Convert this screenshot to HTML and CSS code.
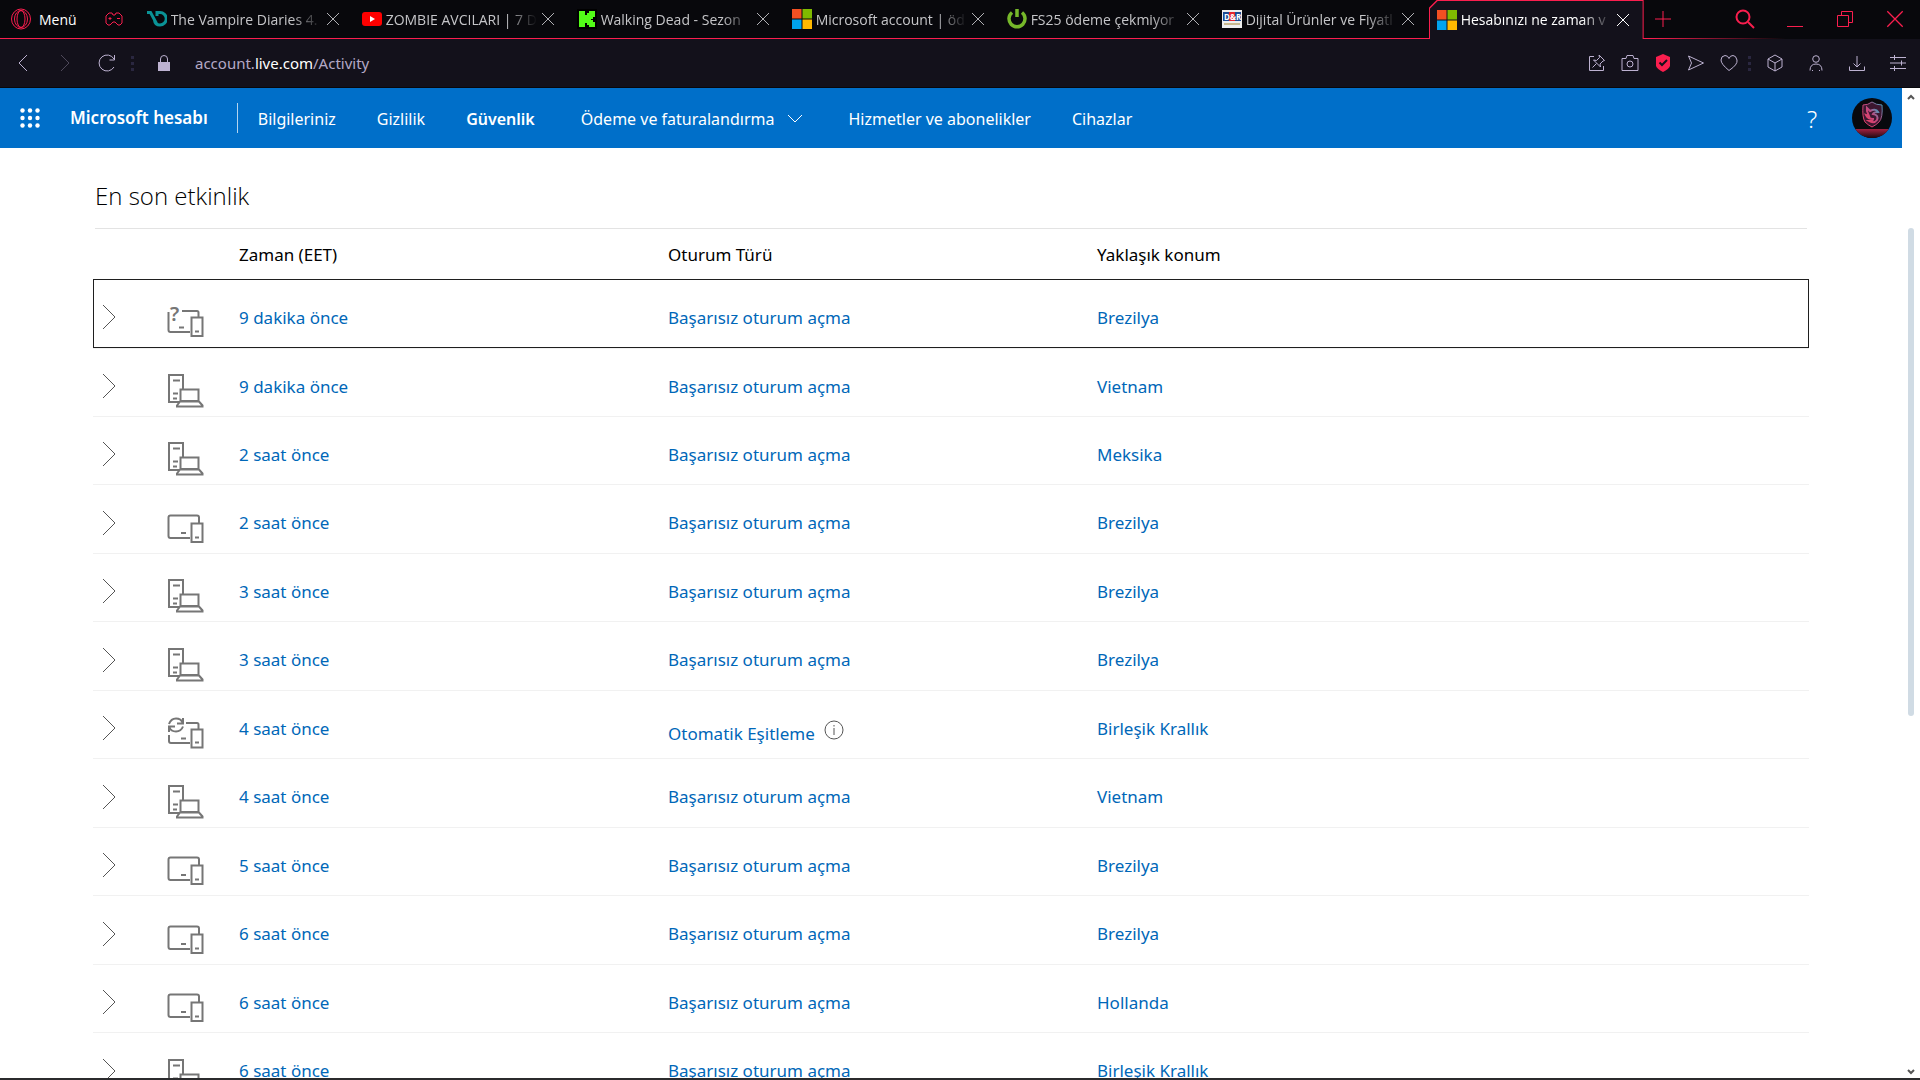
FILE: index.html
```
<!DOCTYPE html>
<html lang="tr">
<head>
    <meta charset="UTF-8">
    <meta name="viewport" content="width=device-width, initial-scale=1.0">
    <title>Hesabınızı ne zaman ve nerede kullandınız</title>
    <link rel="stylesheet" href="styles.css">
</head>
<body>

    <!-- Shared icons -->
    <svg class="sprite" aria-hidden="true">
        <symbol id="close" viewBox="0 0 14 14"><path d="M1 1l12 12M13 1L1 13"/></symbol>
        <symbol id="microsoft" viewBox="0 0 20 20">
            <path fill="#f25022" d="M0 0h9.5v9.5H0z"/><path fill="#7fba00" d="M10.500 0H20v9.500h-9.500z"/>
            <path fill="#00a4ef" d="M0 10.500h9.500V20H0z"/><path fill="#ffb900" d="M10.500 10.500H20V20h-9.500z"/>
        </symbol>
        <symbol id="chevron" viewBox="0 0 14 26"><path d="M1 1l12 12L1 25"/></symbol>
        <symbol id="pc" viewBox="0 0 40 38">
            <path d="M13 30H3V3h14v14M7 8.500h7M7 21.500h5M7 26.500h4"/>
            <path d="M14.500 29V17.500h18V29zM14 29.500h19l3.500 4v1H11v-1z"/>
        </symbol>
        <symbol id="tablet" viewBox="0 0 40 38">
            <path d="M24 29H4.500Q2.500 29 2.500 27V8.500Q2.500 6.500 4.500 6.500H31q2 0 2 2V14M15 24h5"/>
            <path d="M25.500 14.500h11v18.500h-11zM29 28.500h4"/>
        </symbol>
        <symbol id="unknown" viewBox="0 0 40 38">
            <path d="M2.500 9v18q0 2 2 2H24M16 8h15q1.500 0 1.500 1.500V14M13 24.500h5"/>
            <path d="M25.500 14.500h11v18.500h-11zM29 28.500h4"/>
            <text x="4" y="18">?</text>
        </symbol>
        <symbol id="sync" viewBox="0 0 40 38">
            <path d="M3 21v6q0 2 2 2h19M20 9h11q1.500 0 1.500 1.500V15M15 24.500h5"/>
            <path d="M25.500 15.500h11v18h-11zM29 28.500h4"/>
            <path d="M3 10Q5 4.500 10 4.500t6.500 4M17 4v5.500h-6M17 12.500Q15 17.500 10 17.500t-6.500-4M3 18v-5.500h6"/>
        </symbol>
    </svg>

    <!-- Tab strip -->
    <header class="tabbar">
        <button class="menu">
            <svg width="20" height="22" viewBox="0 0 20 22"><ellipse cx="10" cy="11" rx="9.500" ry="10"/><ellipse cx="10" cy="11" rx="6.500" ry="8.500"/><ellipse cx="10" cy="11" rx="4" ry="8.500"/></svg>
            Menü
        </button>
        <button class="gx" aria-label="GX">
            <svg width="18" height="14" viewBox="0 0 18 14"><path d="M4 1h3l1 2h2l1-2h3l3 3v7l-2 2h-2l-3-3H8l-3 3H3l-2-2V4z"/><path d="M5 5v3M3.500 6.500h3M12 6.500h3"/></svg>
        </button>
        <nav class="tabs">
            <div class="tab">
                <svg class="favicon" viewBox="0 0 20 16"><path fill="none" stroke="#0a9396" stroke-width="3" d="M0 1.500h3.500l6 11M10 5V1.500h3a5.500 5.500 0 0 1 0 12.500q-5 0-5.500-5"/></svg>
                <a href="#">The Vampire Diaries 4.</a>
                <button class="close" aria-label="Kapat"><svg><use href="#close"/></svg></button>
            </div>
            <div class="tab">
                <svg class="favicon" viewBox="0 0 20 14"><rect width="20" height="14" rx="3" fill="#f00"/><path fill="#fff" d="M8 4l5 3-5 3z"/></svg>
                <a href="#">ZOMBIE AVCILARI | 7 D</a>
                <button class="close" aria-label="Kapat"><svg><use href="#close"/></svg></button>
            </div>
            <div class="tab">
                <svg class="favicon" viewBox="0 0 20 20"><path fill="#000" d="M0 0h20v20H0z"/><path fill="#53fc18" d="M2 2h6v4h2V4h2V2h6v6h-2v2h-2v1h2v2h2v5h-6v-2h-2v-2H8v4H2z"/></svg>
                <a href="#">Walking Dead - Sezon</a>
                <button class="close" aria-label="Kapat"><svg><use href="#close"/></svg></button>
            </div>
            <div class="tab">
                <svg class="favicon"><use href="#microsoft"/></svg>
                <a href="#">Microsoft account | öd</a>
                <button class="close" aria-label="Kapat"><svg><use href="#close"/></svg></button>
            </div>
            <div class="tab">
                <svg class="favicon" viewBox="0 0 20 20"><path fill="none" stroke="#76b82a" stroke-width="3.500" d="M5 3.500a8 8 0 1 0 10 0M10 0v8"/></svg>
                <a href="#">FS25 ödeme çekmiyor</a>
                <button class="close" aria-label="Kapat"><svg><use href="#close"/></svg></button>
            </div>
            <div class="tab">
                <svg class="favicon" viewBox="0 0 20 18"><path fill="#eee" d="M0 0h20v18H0z"/><path fill="#1c4b93" d="M1 2h6v9H1zM13 2h6v9h-6z"/><path fill="#e3262e" d="M7 2h6v9H7z"/><path fill="#c9b98f" d="M2 13h16v2H2z"/><text x="2" y="10" class="dr">D&amp;R</text></svg>
                <a href="#">Dijital Ürünler ve Fiyatl</a>
                <button class="close" aria-label="Kapat"><svg><use href="#close"/></svg></button>
            </div>
            <div class="tab active">
                <svg class="favicon"><use href="#microsoft"/></svg>
                <a href="#">Hesabınızı ne zaman v</a>
                <button class="close" aria-label="Kapat"><svg><use href="#close"/></svg></button>
            </div>
            <button class="newtab" aria-label="Yeni sekme"><svg width="16" height="16" viewBox="0 0 16 16"><path d="M8 0v16M0 8h16"/></svg></button>
        </nav>
        <div class="window">
            <button aria-label="Ara"><svg width="20" height="20" viewBox="0 0 20 20"><circle cx="8" cy="8" r="6.500" stroke-width="2"/><path stroke-width="2" d="M13 13l6 6"/></svg></button>
            <button aria-label="Simge durumuna küçült"><svg width="16" height="16" viewBox="0 0 16 16"><path d="M0 15.500h16"/></svg></button>
            <button aria-label="Geri yükle"><svg width="16" height="16" viewBox="0 0 16 16"><path d="M.5 4.500h11v11H.5zM4.500 4V.5h11v11H12"/></svg></button>
            <button aria-label="Pencereyi kapat"><svg width="18" height="18"><use href="#close"/></svg></button>
        </div>
    </header>

    <!-- Address bar -->
    <div class="toolbar">
        <button aria-label="Geri"><svg width="10" height="16" viewBox="0 0 10 16"><path d="M9 0L1 8l8 8"/></svg></button>
        <button aria-label="İleri" class="dim"><svg width="10" height="16" viewBox="0 0 10 16"><path d="M1 0l8 8-8 8"/></svg></button>
        <button aria-label="Yenile"><svg width="18" height="18" viewBox="0 0 18 18"><path d="M16 5A8 8 0 1 0 16 13M16.500 1v5h-5"/></svg></button>
        <span class="dots"></span>
        <svg class="lock" width="12" height="16" viewBox="0 0 12 16"><path d="M0 7h12v9H0z"/><path fill="none" stroke="#bdb2d1" d="M2.500 7V4q0-3.500 3.500-3.500T9.500 4v3"/></svg>
        <a class="url" href="#">account.<b>live.com</b>/Activity</a>
        <div class="tools">
            <button aria-label="Sabitle"><svg width="18" height="18" viewBox="0 0 18 18"><path d="M6 2.500H1.500v14h14V12M11 1l5.500 5.500-1.500.500-3 3 .500 3-7-7 3 .500 3-3zM8.500 9.500l-4 4"/></svg></button>
            <button aria-label="Ekran görüntüsü"><svg width="18" height="16" viewBox="0 0 18 16"><path d="M1 3.500h4l1-3h6l1 3h4v12H1z"/><circle cx="9" cy="9" r="3"/></svg></button>
            <button aria-label="Reklam engelleyici"><svg width="16" height="18" viewBox="0 0 16 18"><path fill="#fa1e4e" stroke="none" d="M8 0l7 3v9q-1 3-7 6-6-3-7-6V3z"/><path stroke="#13111b" stroke-width="2" d="M4.500 8.500L7 11l5-5"/></svg></button>
            <button aria-label="Akışım"><svg width="18" height="16" viewBox="0 0 18 16"><path d="M1.500 1l15 7-15 7 3-7z"/></svg></button>
            <button aria-label="Yer imi"><svg width="18" height="16" viewBox="0 0 18 16"><path d="M9 15.500Q1 9 1 5t4-4.500q3 0 4 3 1-3 4-3t4 4.500-8 10.500z"/></svg></button>
        </div>
        <span class="dots"></span>
        <div class="extras">
            <button aria-label="Uzantılar"><svg width="16" height="18" viewBox="0 0 16 18"><path d="M8 1l7 4v8l-7 4-7-4V5zM1 5l7 4 7-4M8 9v8"/></svg></button>
            <button aria-label="Profil"><svg width="14" height="16" viewBox="0 0 14 16"><circle cx="7" cy="4" r="3.300"/><path d="M1 15.500q0-6.500 6-6.500t6 6.500M3 15.500h1M10 15.500h1"/></svg></button>
            <button aria-label="İndirilenler"><svg width="16" height="16" viewBox="0 0 16 16"><path d="M8 1v11M4.500 8.500L8 12l3.500-3.500M.5 11.500v4h15v-4"/></svg></button>
            <button aria-label="Ayarlar"><svg width="16" height="16" viewBox="0 0 16 16"><path d="M0 2.500h16M0 8h16M0 13.500h16M4.500 0v5M11.500 5.500v5M4.500 11v5"/></svg></button>
        </div>
    </div>

    <div class="viewport">
        <div class="page">
            <!-- Account header -->
            <header class="account">
                <button class="waffle" aria-label="Uygulamalar">
                    <svg width="20" height="20" viewBox="0 0 20 20"><circle cx="2.500" cy="2.500" r="2.200"/><circle cx="10" cy="2.500" r="2.200"/><circle cx="17.500" cy="2.500" r="2.200"/><circle cx="2.500" cy="10" r="2.200"/><circle cx="10" cy="10" r="2.200"/><circle cx="17.500" cy="10" r="2.200"/><circle cx="2.500" cy="17.500" r="2.200"/><circle cx="10" cy="17.500" r="2.200"/><circle cx="17.500" cy="17.500" r="2.200"/></svg>
                </button>
                <a class="brand" href="#">Microsoft hesabı</a>
                <nav>
                    <a href="#">Bilgileriniz</a>
                    <a href="#">Gizlilik</a>
                    <a href="#" class="current">Güvenlik</a>
                    <button class="drop">Ödeme ve faturalandırma <svg width="16" height="10" viewBox="0 0 16 10"><path d="M1 1l7 7 7-7"/></svg></button>
                    <a href="#">Hizmetler ve abonelikler</a>
                    <a href="#">Cihazlar</a>
                </nav>
                <button class="help" aria-label="Yardım">?</button>
                <button class="avatar" aria-label="Hesabım">
                    <svg width="40" height="40" viewBox="0 0 40 40">
                        <defs>
                            <linearGradient id="neon" x1="1" y1="0" x2="0" y2="1"><stop offset="0" stop-color="#38a9c4"/><stop offset=".45" stop-color="#c2487f"/><stop offset="1" stop-color="#e83f62"/></linearGradient>
                            <linearGradient id="floor" x1="0" y1="0" x2="0" y2="1"><stop offset="0" stop-color="#a3203f"/><stop offset="1" stop-color="#1c0a12"/></linearGradient>
                            <clipPath id="round"><circle cx="20" cy="20" r="20"/></clipPath>
                        </defs>
                        <g clip-path="url(#round)">
                            <path fill="#08090d" d="M0 0h40v40H0z"/>
                            <path fill="url(#floor)" d="M0 31h40v9H0z"/>
                            <path fill="#3c1730" stroke="url(#neon)" d="M11 7q5 0 9-3 4 3 10 3 1 13-3 17-3 3-7 5-4-2-7-5-3-5-2-17z"/>
                            <path fill="none" stroke="url(#neon)" stroke-width="2" d="M15 10l3 3q6-3 8 1-4 0-5 2 6 1 4 6-3 4-8 1 4 0 4-2-5 0-7-4l3 1-2-5z"/>
                        </g>
                    </svg>
                </button>
            </header>

            <main>
                <h1>En son etkinlik</h1>
                <table>
                    <colgroup><col class="c-toggle"><col class="c-device"><col class="c-text"><col class="c-text"><col></colgroup>
                    <thead>
                        <tr><td></td><td></td><th>Zaman (EET)</th><th>Oturum Türü</th><th>Yaklaşık konum</th></tr>
                    </thead>
                    <tbody>
                        <tr class="focused">
                            <td><button aria-label="Genişlet"><svg><use href="#chevron"/></svg></button></td>
                            <td><svg class="device"><use href="#unknown"/></svg></td>
                            <td><a href="#">9 dakika önce</a></td><td><a href="#">Başarısız oturum açma</a></td><td><a href="#">Brezilya</a></td>
                        </tr>
                        <tr>
                            <td><button aria-label="Genişlet"><svg><use href="#chevron"/></svg></button></td>
                            <td><svg class="device"><use href="#pc"/></svg></td>
                            <td><a href="#">9 dakika önce</a></td><td><a href="#">Başarısız oturum açma</a></td><td><a href="#">Vietnam</a></td>
                        </tr>
                        <tr>
                            <td><button aria-label="Genişlet"><svg><use href="#chevron"/></svg></button></td>
                            <td><svg class="device"><use href="#pc"/></svg></td>
                            <td><a href="#">2 saat önce</a></td><td><a href="#">Başarısız oturum açma</a></td><td><a href="#">Meksika</a></td>
                        </tr>
                        <tr>
                            <td><button aria-label="Genişlet"><svg><use href="#chevron"/></svg></button></td>
                            <td><svg class="device"><use href="#tablet"/></svg></td>
                            <td><a href="#">2 saat önce</a></td><td><a href="#">Başarısız oturum açma</a></td><td><a href="#">Brezilya</a></td>
                        </tr>
                        <tr>
                            <td><button aria-label="Genişlet"><svg><use href="#chevron"/></svg></button></td>
                            <td><svg class="device"><use href="#pc"/></svg></td>
                            <td><a href="#">3 saat önce</a></td><td><a href="#">Başarısız oturum açma</a></td><td><a href="#">Brezilya</a></td>
                        </tr>
                        <tr>
                            <td><button aria-label="Genişlet"><svg><use href="#chevron"/></svg></button></td>
                            <td><svg class="device"><use href="#pc"/></svg></td>
                            <td><a href="#">3 saat önce</a></td><td><a href="#">Başarısız oturum açma</a></td><td><a href="#">Brezilya</a></td>
                        </tr>
                        <tr>
                            <td><button aria-label="Genişlet"><svg><use href="#chevron"/></svg></button></td>
                            <td><svg class="device"><use href="#sync"/></svg></td>
                            <td><a href="#">4 saat önce</a></td>
                            <td class="auto"><a href="#">Otomatik Eşitleme</a> <button class="info" aria-label="Bilgi"><svg width="20" height="20" viewBox="0 0 20 20"><circle cx="10" cy="10" r="9"/><path d="M10 8v7M10 5v1.500"/></svg></button></td>
                            <td><a href="#">Birleşik Krallık</a></td>
                        </tr>
                        <tr>
                            <td><button aria-label="Genişlet"><svg><use href="#chevron"/></svg></button></td>
                            <td><svg class="device"><use href="#pc"/></svg></td>
                            <td><a href="#">4 saat önce</a></td><td><a href="#">Başarısız oturum açma</a></td><td><a href="#">Vietnam</a></td>
                        </tr>
                        <tr>
                            <td><button aria-label="Genişlet"><svg><use href="#chevron"/></svg></button></td>
                            <td><svg class="device"><use href="#tablet"/></svg></td>
                            <td><a href="#">5 saat önce</a></td><td><a href="#">Başarısız oturum açma</a></td><td><a href="#">Brezilya</a></td>
                        </tr>
                        <tr>
                            <td><button aria-label="Genişlet"><svg><use href="#chevron"/></svg></button></td>
                            <td><svg class="device"><use href="#tablet"/></svg></td>
                            <td><a href="#">6 saat önce</a></td><td><a href="#">Başarısız oturum açma</a></td><td><a href="#">Brezilya</a></td>
                        </tr>
                        <tr>
                            <td><button aria-label="Genişlet"><svg><use href="#chevron"/></svg></button></td>
                            <td><svg class="device"><use href="#tablet"/></svg></td>
                            <td><a href="#">6 saat önce</a></td><td><a href="#">Başarısız oturum açma</a></td><td><a href="#">Hollanda</a></td>
                        </tr>
                        <tr>
                            <td><button aria-label="Genişlet"><svg><use href="#chevron"/></svg></button></td>
                            <td><svg class="device"><use href="#pc"/></svg></td>
                            <td><a href="#">6 saat önce</a></td><td><a href="#">Başarısız oturum açma</a></td><td><a href="#">Birleşik Krallık</a></td>
                        </tr>
                    </tbody>
                </table>
            </main>
        </div>

        <div class="scrollbar">
            <svg width="8" height="6" viewBox="0 0 8 6"><path d="M1 5l3-3 3 3"/></svg>
            <div class="track"><div class="thumb"></div></div>
            <svg width="8" height="6" viewBox="0 0 8 6"><path d="M1 1l3 3 3-3"/></svg>
        </div>
    </div>
    <div class="taskbar-edge"></div>

</body>
</html>
```
FILE: styles.css
```
* {
    box-sizing: border-box;
}

body {
    margin: 0;
    height: 100vh;
    display: flex;
    flex-direction: column;
    overflow: hidden;
    font-family: "Noto Sans", "Open Sans", sans-serif;
    font-size: 17px;
    color: #000;
    background-color: #fff;
}

button {
    margin: 0;
    padding: 0;
    border: none;
    background: none;
    font: inherit;
    color: inherit;
    display: flex;
    align-items: center;
    justify-content: center;
    cursor: pointer;
}

a {
    color: inherit;
    text-decoration: none;
}

svg {
    flex: none;
    display: block;
    fill: none;
}

.sprite {
    display: none;
}

/* Tab strip */
.tabbar {
    display: flex;
    height: 39px;
    padding-bottom: 1px;
    background: linear-gradient(to right, #fa1e4e 86%, transparent 93%) bottom / 100% 1px no-repeat #08080c;
    color: #c5c5c8;
    font-family: "Open Sans", "Noto Sans", sans-serif;
    font-size: 14px;
}

.tabbar svg {
    stroke: #fa1e4e;
}

.menu {
    gap: 8px;
    margin-left: 11px;
    color: #fff;
}

.gx {
    width: 62px;
    padding-left: 12px;
}

.tabs {
    flex: 1;
    display: flex;
    min-width: 0;
}

.tab {
    flex: 0 1 215px;
    min-width: 0;
    display: flex;
    align-items: center;
    gap: 4px;
    padding: 0 14px 0 8px;
}

.tab a {
    flex: 1;
    min-width: 0;
    overflow: hidden;
    white-space: nowrap;
    mask-image: linear-gradient(to right, #000 80%, transparent);
}

.tab .favicon {
    width: 20px;
    height: 20px;
    stroke: none;
}

.dr {
    font-size: 8px;
    font-weight: bold;
    fill: #fff;
}

.close svg {
    width: 14px;
    height: 14px;
    stroke: #b0b0b4;
}

.active {
    position: relative;
    z-index: 0;
    margin-bottom: -1px;
    background-color: #fa1e4e;
    color: #fff;
    clip-path: polygon(0 8px, 8px 0, 100% 0, 100% 100%, 0 100%);
}

.active::before {
    content: "";
    position: absolute;
    inset: 1px 1px 0;
    z-index: -1;
    background-color: #13111b;
    clip-path: polygon(0 8px, 8px 0, 100% 0, 100% 100%, 0 100%);
}

.active .close svg {
    stroke: #fff;
}

.newtab {
    width: 38px;
}

.window {
    display: flex;
}

.window button {
    width: 50px;
}

/* Address bar */
.toolbar {
    display: flex;
    align-items: center;
    height: 49px;
    padding: 0 2px;
    background-color: #13111b;
    border-bottom: 1px solid #08080c;
    color: #b3a9c6;
    font-size: 15px;
}

.toolbar button {
    width: 42px;
    height: 40px;
}

.toolbar svg {
    stroke: #bdb2d1;
}

.toolbar .dim {
    opacity: 0.35;
}

.dots {
    width: 3px;
    height: 15px;
    margin: 0 3px;
    background: repeating-linear-gradient(#2a2740 0 3px, transparent 3px 6px);
}

.toolbar .lock {
    margin: 0 25px 0 21px;
    fill: #bdb2d1;
    stroke: none;
}

.url {
    flex: 1;
}

.url b {
    font-weight: 400;
    color: #fff;
}

.tools,
.extras {
    display: flex;
}

.toolbar .tools button {
    width: 33px;
}

.toolbar .extras button {
    width: 41px;
}

/* Page area */
.viewport {
    flex: 1;
    min-height: 0;
    display: flex;
}

.page {
    flex: 1;
    min-width: 0;
    overflow: hidden;
}

.account {
    display: flex;
    align-items: center;
    height: 60px;
    padding: 0 10px 0 20px;
    background-color: #006fc9;
    color: #fff;
    font-size: 16px;
}

.waffle svg {
    fill: #fff;
}

.brand {
    margin-left: 30px;
    padding-right: 29px;
    border-right: 1px solid #b3d4ef;
    font-size: 17px;
    font-weight: 600;
    line-height: 30px;
}

.account nav {
    flex: 1;
    display: flex;
    gap: 41px;
    margin-left: 20px;
    padding-top: 1px;
    white-space: nowrap;
}

.current {
    font-weight: 600;
}

.drop {
    gap: 12px;
    margin: 0 5px;
}

.drop svg {
    stroke: #fff;
}

.help {
    width: 40px;
    font-size: 24px;
    font-weight: 300;
}

.avatar {
    margin-left: 20px;
}

main {
    padding: 32px 93px 0;
}

h1 {
    margin: 0 2px;
    padding-bottom: 16px;
    border-bottom: 1px solid #e3e3e3;
    font-family: "Open Sans", "Noto Sans", sans-serif;
    font-size: 24px;
    font-weight: 300;
    line-height: 32px;
}

/* Activity table */
table {
    width: 100%;
    table-layout: fixed;
    border-collapse: collapse;
}

.c-toggle,
.c-device {
    width: 73px;
}

.c-text {
    width: 25%;
}

thead tr {
    height: 50px;
}

th {
    padding: 0;
    text-align: left;
    font-weight: 400;
}

tbody tr {
    height: 68px;
    border-bottom: 1px solid #f1f1f1;
    color: #0067b8;
}

tbody tr:nth-child(even) {
    height: 69px;
}

tbody .focused {
    height: 69px;
    outline: 1px solid #1f1f1f;
    outline-offset: -1px;
}

tbody .focused + tr:nth-child(even) {
    height: 68px;
}

td {
    padding: 8px 0 0;
}

td button svg {
    width: 14px;
    height: 26px;
    margin-left: 9px;
    stroke: #555;
}

.device {
    width: 40px;
    height: 38px;
    margin-top: 10px;
    stroke: #767676;
    stroke-width: 2;
}

symbol text {
    font-size: 20px;
    font-weight: 600;
    fill: #767676;
    stroke: none;
}

.auto {
    padding-top: 16px;
}

.auto .info {
    display: inline-flex;
}

.auto .info svg {
    width: 20px;
    height: 20px;
    margin-left: 5px;
}

/* Scrollbar */
.scrollbar {
    width: 18px;
    display: flex;
    flex-direction: column;
    align-items: center;
    padding: 6px 0 3px;
    stroke: #555;
    stroke-width: 2;
}

.track {
    flex: 1;
    width: 6px;
    padding-top: 128px;
}

.thumb {
    height: 58%;
    border-radius: 3px;
    background-color: #d0dbe4;
}

.taskbar-edge {
    height: 2px;
    background: #2b2b2d;
}
```
